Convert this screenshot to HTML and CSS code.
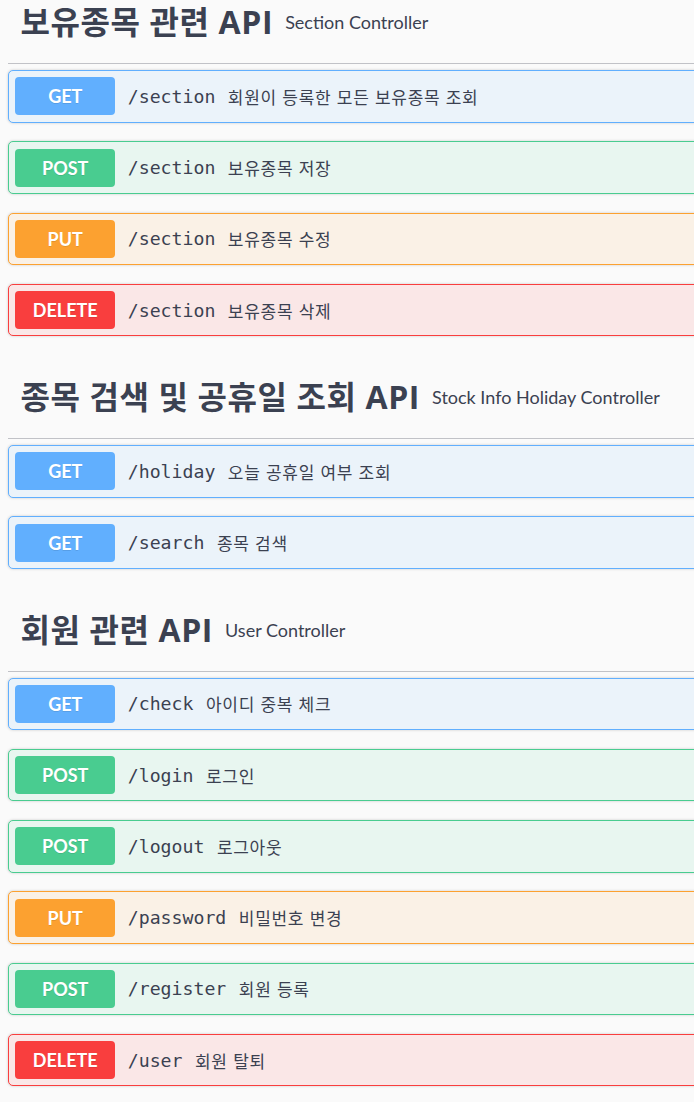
FILE: index.html
```html
<!DOCTYPE html>
<html lang="ko">
<head>
<meta charset="utf-8">
<title>Swagger UI</title>
<link rel="stylesheet" href="styles.css">
</head>
<body>
<div class="wrapper">
  <section class="tag-section first">
    <h3 class="tag"><span class="tag-name">보유종목 관련 API</span><small class="tag-desc">Section Controller</small></h3>
    <div class="op get"><span class="method">GET</span><span class="path">/section</span><span class="desc">회원이 등록한 모든 보유종목 조회</span></div>
    <div class="op post"><span class="method">POST</span><span class="path">/section</span><span class="desc">보유종목 저장</span></div>
    <div class="op put"><span class="method">PUT</span><span class="path">/section</span><span class="desc">보유종목 수정</span></div>
    <div class="op delete"><span class="method">DELETE</span><span class="path">/section</span><span class="desc">보유종목 삭제</span></div>
  </section>
  <section class="tag-section">
    <h3 class="tag"><span class="tag-name">종목 검색 및 공휴일 조회 API</span><small class="tag-desc">Stock Info Holiday Controller</small></h3>
    <div class="op get"><span class="method">GET</span><span class="path">/holiday</span><span class="desc">오늘 공휴일 여부 조회</span></div>
    <div class="op get"><span class="method">GET</span><span class="path">/search</span><span class="desc">종목 검색</span></div>
  </section>
  <section class="tag-section">
    <h3 class="tag"><span class="tag-name">회원 관련 API</span><small class="tag-desc">User Controller</small></h3>
    <div class="op get"><span class="method">GET</span><span class="path">/check</span><span class="desc">아이디 중복 체크</span></div>
    <div class="op post"><span class="method">POST</span><span class="path">/login</span><span class="desc">로그인</span></div>
    <div class="op post"><span class="method">POST</span><span class="path">/logout</span><span class="desc">로그아웃</span></div>
    <div class="op put"><span class="method">PUT</span><span class="path">/password</span><span class="desc">비밀번호 변경</span></div>
    <div class="op post"><span class="method">POST</span><span class="path">/register</span><span class="desc">회원 등록</span></div>
    <div class="op delete"><span class="method">DELETE</span><span class="path">/user</span><span class="desc">회원 탈퇴</span></div>
  </section>
</div>
</body>
</html>
```
FILE: styles.css
```css
html, body {
  margin: 0;
  padding: 0;
  background: #fafafa;
  overflow: hidden;
}
.wrapper {
  padding-left: 8px;
  width: 760px;
  color: #3b4151;
  font-family: "Open Sans", "Noto Sans CJK KR", sans-serif;
}
.tag-section {
  display: flow-root;
  padding-top: 11px;
}
.tag-section.first {
  padding-top: 0;
}
.tag {
  margin: 0 0 6px 0;
  padding: 12px 10px 22px 12.5px;
  height: 38px;
  display: flex;
  align-items: center;
  border-bottom: 1px solid #c1c2c7;
}
.first .tag {
  padding-top: 3px;
}
.tag-name {
  font-family: "Open Sans", "Noto Sans CJK KR", sans-serif;
  font-size: 32px;
  letter-spacing: 0.6px;
  font-weight: 700;
  line-height: 38px;
  color: #3b4151;
}
.tag-desc {
  font-family: "Lato", "Noto Sans CJK KR", sans-serif;
  font-size: 18px;
  font-weight: 400;
  padding-left: 12px;
  color: #3b4151;
}
.op {
  display: flex;
  align-items: center;
  padding: 6.25px;
  margin-bottom: 18.75px;
  border: 1px solid;
  border-radius: 5px;
  box-shadow: 0 0 3px rgba(0, 0, 0, .19);
}
.method {
  width: 100px;
  height: 38px;
  border-radius: 4px;
  display: flex;
  align-items: center;
  justify-content: center;
  color: #fff;
  font-family: "Lato", sans-serif;
  font-weight: 700;
  font-size: 18px;
  text-shadow: 0 1px 0 rgba(0, 0, 0, .1);
}
.path {
  padding: 0 12.5px;
  font-family: "DejaVu Sans Mono", monospace;
  font-size: 18.2px;
  color: #3b4151;
}
.desc {
  font-family: "Noto Sans CJK KR", sans-serif;
  font-size: 17px;
  letter-spacing: 0.7px;
  color: #3b4151;
}
.get { background: #ebf3fa; border-color: #61affe; }
.get .method { background: #61affe; }
.post { background: #e8f6f0; border-color: #49cc90; }
.post .method { background: #49cc90; }
.put { background: #faf1e6; border-color: #fca130; }
.put .method { background: #fca130; }
.delete { background: #fae7e7; border-color: #f93e3e; }
.delete .method { background: #f93e3e; }
```
